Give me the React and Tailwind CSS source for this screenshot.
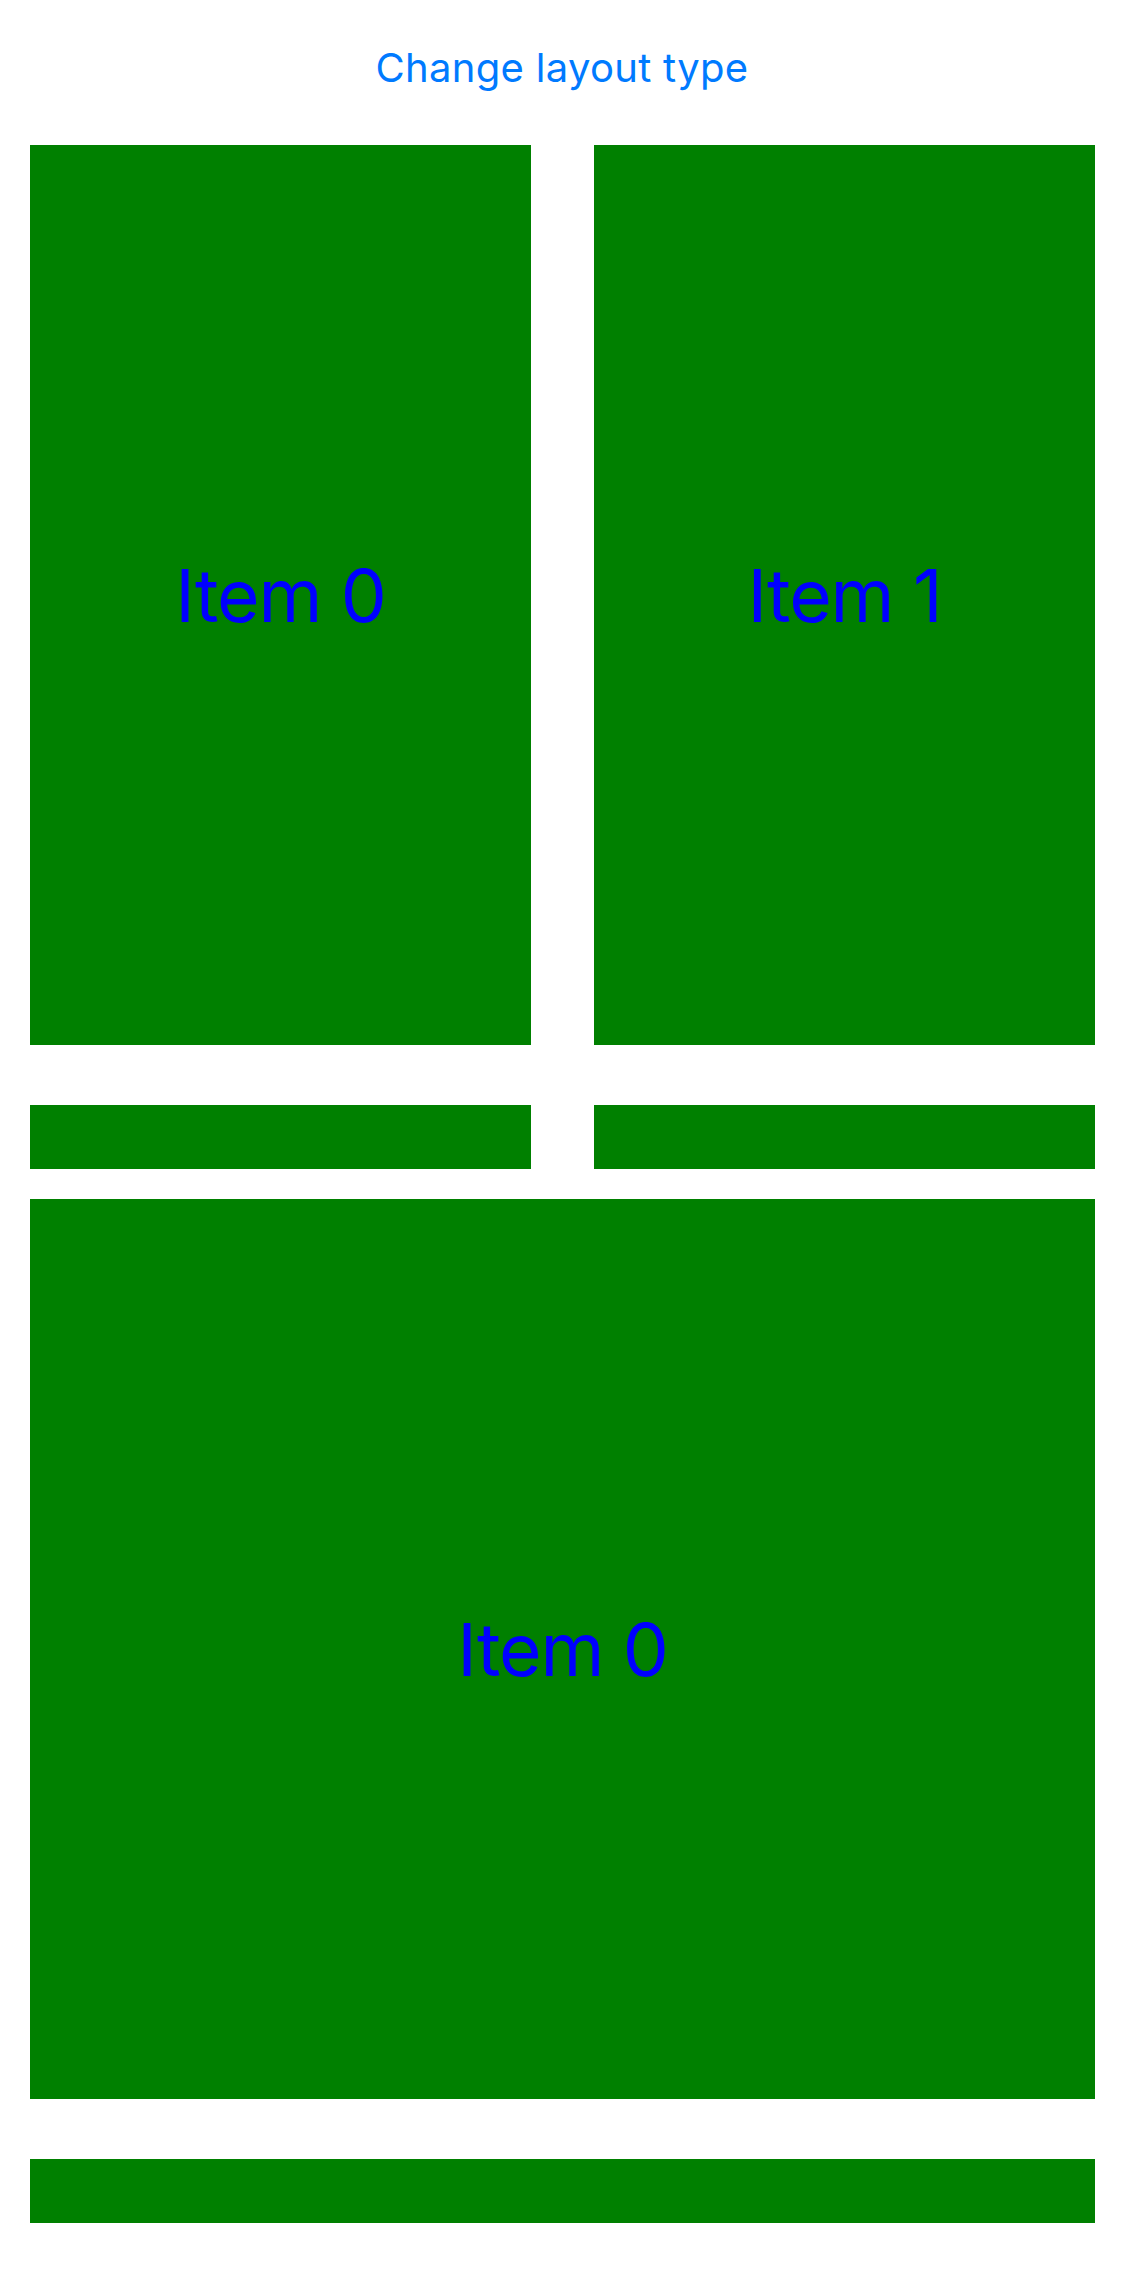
export default function App() {
  const font = { fontFamily: 'Inter, "Noto Sans", sans-serif' };
  return (
    <div className="w-[1124px] h-[2286px] bg-white" style={font}>
      <div className="pt-[47px] h-[145px] flex justify-center">
        <span className="text-[40px] leading-none tracking-[0.3px] text-[#007aff] h-[42px] flex items-center">Change layout type</span>
      </div>
      <div className="pl-[30px] flex flex-col">
        <div className="flex gap-[63px]">
          <div className="w-[501px] h-[900px] bg-[#008000] flex items-center justify-center">
            <span className="text-[73px] leading-none tracking-[-1.1px] text-[#0000ff]">Item 0</span>
          </div>
          <div className="w-[501px] h-[900px] bg-[#008000] flex items-center justify-center">
            <span className="text-[73px] leading-none tracking-[-1.1px] text-[#0000ff]">Item 1</span>
          </div>
        </div>
        <div className="flex gap-[63px] mt-[60px]">
          <div className="w-[501px] h-[64px] bg-[#008000]" />
          <div className="w-[501px] h-[64px] bg-[#008000]" />
        </div>
        <div className="w-[1065px] h-[900px] bg-[#008000] mt-[30px] flex items-center justify-center">
          <span className="text-[73px] leading-none tracking-[-1.1px] text-[#0000ff]">Item 0</span>
        </div>
        <div className="w-[1065px] h-[64px] bg-[#008000] mt-[60px]" />
      </div>
    </div>
  );
}
